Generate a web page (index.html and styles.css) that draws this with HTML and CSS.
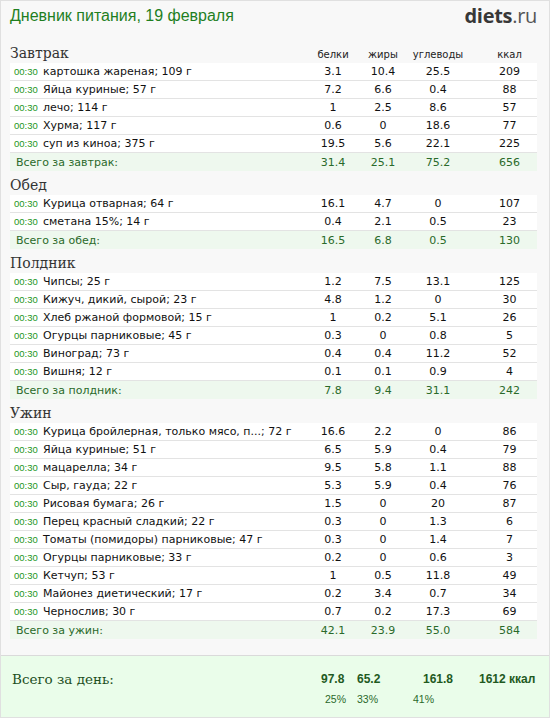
FILE: index.html
```html
<!DOCTYPE html>
<html lang="ru">
<head>
<meta charset="utf-8">
<title>Дневник питания</title>
<link rel="stylesheet" href="styles.css">
</head>
<body>
<div class="page">
  <header class="top">
    <h1 class="title">Дневник питания, 19 февраля</h1>
    <div class="logo"><b>diets</b>.ru</div>
  </header>

  <main class="meals">
    <section class="meal">
      <div class="meal-head">
        <h2>Завтрак</h2><span class="c">белки</span><span class="c">жиры</span><span class="c">углеводы</span><span class="c k">ккал</span>
      </div>
      <div class="row"><div class="name"><span class="time">00:30</span>картошка жареная; 109 г</div><div class="c">3.1</div><div class="c">10.4</div><div class="c">25.5</div><div class="c k">209</div></div>
      <div class="row"><div class="name"><span class="time">00:30</span>Яйца куриные; 57 г</div><div class="c">7.2</div><div class="c">6.6</div><div class="c">0.4</div><div class="c k">88</div></div>
      <div class="row"><div class="name"><span class="time">00:30</span>лечо; 114 г</div><div class="c">1</div><div class="c">2.5</div><div class="c">8.6</div><div class="c k">57</div></div>
      <div class="row"><div class="name"><span class="time">00:30</span>Хурма; 117 г</div><div class="c">0.6</div><div class="c">0</div><div class="c">18.6</div><div class="c k">77</div></div>
      <div class="row"><div class="name"><span class="time">00:30</span>суп из киноа; 375 г</div><div class="c">19.5</div><div class="c">5.6</div><div class="c">22.1</div><div class="c k">225</div></div>
      <div class="row total"><div class="name">Всего за завтрак:</div><div class="c">31.4</div><div class="c">25.1</div><div class="c">75.2</div><div class="c k">656</div></div>
    </section>

    <section class="meal">
      <div class="meal-head"><h2>Обед</h2></div>
      <div class="row"><div class="name"><span class="time">00:30</span>Курица отварная; 64 г</div><div class="c">16.1</div><div class="c">4.7</div><div class="c">0</div><div class="c k">107</div></div>
      <div class="row"><div class="name"><span class="time">00:30</span>сметана 15%; 14 г</div><div class="c">0.4</div><div class="c">2.1</div><div class="c">0.5</div><div class="c k">23</div></div>
      <div class="row total"><div class="name">Всего за обед:</div><div class="c">16.5</div><div class="c">6.8</div><div class="c">0.5</div><div class="c k">130</div></div>
    </section>

    <section class="meal">
      <div class="meal-head"><h2>Полдник</h2></div>
      <div class="row"><div class="name"><span class="time">00:30</span>Чипсы; 25 г</div><div class="c">1.2</div><div class="c">7.5</div><div class="c">13.1</div><div class="c k">125</div></div>
      <div class="row"><div class="name"><span class="time">00:30</span>Кижуч, дикий, сырой; 23 г</div><div class="c">4.8</div><div class="c">1.2</div><div class="c">0</div><div class="c k">30</div></div>
      <div class="row"><div class="name"><span class="time">00:30</span>Хлеб ржаной формовой; 15 г</div><div class="c">1</div><div class="c">0.2</div><div class="c">5.1</div><div class="c k">26</div></div>
      <div class="row"><div class="name"><span class="time">00:30</span>Огурцы парниковые; 45 г</div><div class="c">0.3</div><div class="c">0</div><div class="c">0.8</div><div class="c k">5</div></div>
      <div class="row"><div class="name"><span class="time">00:30</span>Виноград; 73 г</div><div class="c">0.4</div><div class="c">0.4</div><div class="c">11.2</div><div class="c k">52</div></div>
      <div class="row"><div class="name"><span class="time">00:30</span>Вишня; 12 г</div><div class="c">0.1</div><div class="c">0.1</div><div class="c">0.9</div><div class="c k">4</div></div>
      <div class="row total"><div class="name">Всего за полдник:</div><div class="c">7.8</div><div class="c">9.4</div><div class="c">31.1</div><div class="c k">242</div></div>
    </section>

    <section class="meal">
      <div class="meal-head"><h2>Ужин</h2></div>
      <div class="row"><div class="name"><span class="time">00:30</span>Курица бройлерная, только мясо, п...; 72 г</div><div class="c">16.6</div><div class="c">2.2</div><div class="c">0</div><div class="c k">86</div></div>
      <div class="row"><div class="name"><span class="time">00:30</span>Яйца куриные; 51 г</div><div class="c">6.5</div><div class="c">5.9</div><div class="c">0.4</div><div class="c k">79</div></div>
      <div class="row"><div class="name"><span class="time">00:30</span>мацарелла; 34 г</div><div class="c">9.5</div><div class="c">5.8</div><div class="c">1.1</div><div class="c k">88</div></div>
      <div class="row"><div class="name"><span class="time">00:30</span>Сыр, гауда; 22 г</div><div class="c">5.3</div><div class="c">5.9</div><div class="c">0.4</div><div class="c k">76</div></div>
      <div class="row"><div class="name"><span class="time">00:30</span>Рисовая бумага; 26 г</div><div class="c">1.5</div><div class="c">0</div><div class="c">20</div><div class="c k">87</div></div>
      <div class="row"><div class="name"><span class="time">00:30</span>Перец красный сладкий; 22 г</div><div class="c">0.3</div><div class="c">0</div><div class="c">1.3</div><div class="c k">6</div></div>
      <div class="row"><div class="name"><span class="time">00:30</span>Томаты (помидоры) парниковые; 47 г</div><div class="c">0.3</div><div class="c">0</div><div class="c">1.4</div><div class="c k">7</div></div>
      <div class="row"><div class="name"><span class="time">00:30</span>Огурцы парниковые; 33 г</div><div class="c">0.2</div><div class="c">0</div><div class="c">0.6</div><div class="c k">3</div></div>
      <div class="row"><div class="name"><span class="time">00:30</span>Кетчуп; 53 г</div><div class="c">1</div><div class="c">0.5</div><div class="c">11.8</div><div class="c k">49</div></div>
      <div class="row"><div class="name"><span class="time">00:30</span>Майонез диетический; 17 г</div><div class="c">0.2</div><div class="c">3.4</div><div class="c">0.7</div><div class="c k">34</div></div>
      <div class="row"><div class="name"><span class="time">00:30</span>Чернослив; 30 г</div><div class="c">0.7</div><div class="c">0.2</div><div class="c">17.3</div><div class="c k">69</div></div>
      <div class="row total"><div class="name">Всего за ужин:</div><div class="c">42.1</div><div class="c">23.9</div><div class="c">55.0</div><div class="c k">584</div></div>
    </section>
  </main>

  <footer class="day">
    <div class="day-grid">
      <div class="day-label">Всего за день:</div>
      <div class="dv a">97.8</div>
      <div class="dv b">65.2</div>
      <div class="dv c3">161.8</div>
      <div class="dv d">1612 ккал</div>
      <div></div>
      <div class="dp a">25%</div>
      <div class="dp b">33%</div>
      <div class="dp c3">41%</div>
      <div></div>
    </div>
  </footer>
</div>
</body>
</html>
```

FILE: styles.css
```css
html, body {
  margin: 0;
  padding: 0;
  background: #ffffff;
}

.page {
  width: 550px;
  height: 718px;
  box-sizing: border-box;
  border: 1px solid #e0e0e0;
  background: #f8f8f8;
  display: flex;
  flex-direction: column;
  font-family: "DejaVu Sans", Verdana, sans-serif;
  color: #111;
}

.top {
  height: 38px;
  flex: none;
  display: flex;
  justify-content: space-between;
  align-items: flex-start;
  padding: 0 12px 0 9px;
}

.title {
  margin: 0;
  padding-top: 5px;
  font-family: "Liberation Sans", Arial, sans-serif;
  font-weight: normal;
  font-size: 16px;
  line-height: 20px;
  color: #1f7f1f;
}

.logo {
  padding-top: 2px;
  font-family: "Open Sans", sans-serif;
  font-size: 20px;
  line-height: 26px;
  color: #555;
  letter-spacing: -0.3px;
}

.logo b {
  font-weight: 700;
  color: #383838;
}

.meals {
  flex: none;
  padding: 0 12px 0 9px;
}

.meal-head,
.row {
  display: grid;
  grid-template-columns: 1fr 50px 50px 60px 69px;
}

.meal-head {
  height: 24px;
  align-items: end;
  font-size: 10px;
  color: #222;
}

.meal-head span {
  padding-bottom: 3px;
}

.meal-head h2 {
  margin: 0;
  padding-bottom: 1px;
  font-family: "DejaVu Serif", Georgia, serif;
  font-weight: normal;
  font-size: 14px;
  line-height: 18px;
  color: #333;
}

.c {
  text-align: center;
}

.k {
  padding-left: 14px;
}

.row {
  height: 17px;
  align-items: center;
  background: #ffffff;
  border-bottom: 1px solid #e3e3e3;
  font-size: 11px;
  line-height: 17px;
  color: #111;
}

.name {
  white-space: nowrap;
  overflow: hidden;
  padding-left: 4px;
}

.time {
  display: inline-block;
  width: 29px;
  font-family: "Liberation Sans", Arial, sans-serif;
  font-size: 9.5px;
  color: #1c961c;
}

.row.total {
  height: 18px;
  border-bottom: none;
  background: #eef8ee;
  color: #2a6a2a;
}

.row.total .name {
  padding-left: 6px;
}

.day {
  flex: 1;
  margin-top: 16px;
  border-top: 1px solid #dadada;
  background: #eafdea;
  padding: 0 12px 0 9px;
}

.day-grid {
  display: grid;
  grid-template-columns: 1fr 35px 56px 66px 59px;
  grid-template-rows: 20px 20px;
  padding-top: 13px;
}

.day-label {
  padding-left: 2px;
  font-family: "DejaVu Serif", Georgia, serif;
  font-size: 13.5px;
  line-height: 20px;
  color: #1d4f1d;
}

.dv {
  font-family: "Liberation Sans", Arial, sans-serif;
  font-weight: bold;
  font-size: 12px;
  line-height: 20px;
  color: #1f5a1f;
  white-space: nowrap;
}

.dp {
  font-family: "Liberation Sans", Arial, sans-serif;
  font-size: 10.5px;
  line-height: 20px;
  color: #2a6a2a;
}

.dv.a { padding-left: 0; }
.dp.a { padding-left: 4px; }
.dv.b, .dp.b { padding-left: 1px; }
.dv.c3 { padding-left: 11px; }
.dp.c3 { padding-left: 1px; }
.dv.d { padding-left: 1px; }
```
